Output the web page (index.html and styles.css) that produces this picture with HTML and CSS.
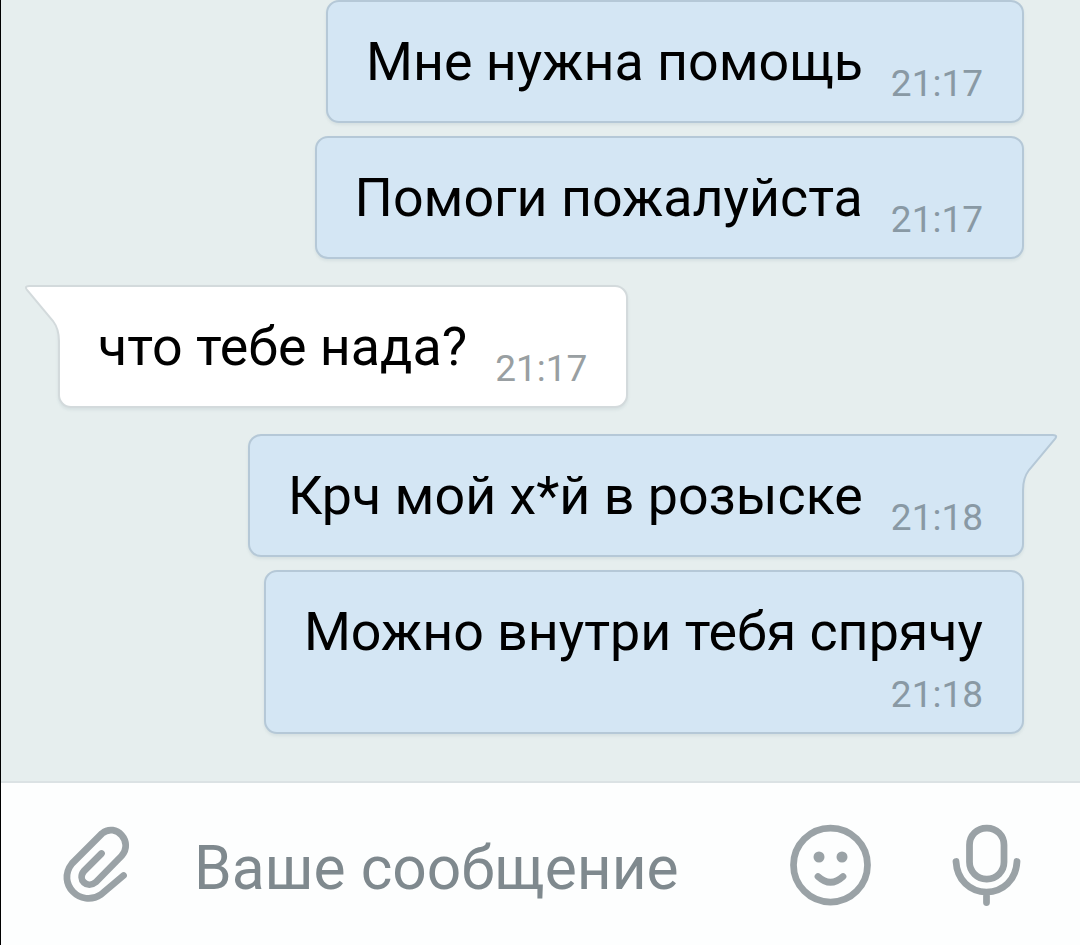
FILE: index.html
```html
<!DOCTYPE html>
<html lang="ru">
<head>
    <meta charset="UTF-8">
    <meta name="viewport" content="width=device-width, initial-scale=1.0">
    <title>Сообщения</title>
    <link rel="stylesheet" href="styles.css">
</head>
<body>

<!-- Переписка -->
<main class="chat">
    <div class="message out">
        <span class="text">Мне нужна помощь</span>
        <span class="time">21:17</span>
    </div>
    <div class="message out second">
        <span class="text">Помоги пожалуйста</span>
        <span class="time">21:17</span>
    </div>
    <div class="message in">
        <svg class="tail" width="50" height="64" viewBox="0 0 50 64">
            <path class="tail-fill" d="M50 1H5Q0 1 3 5L29 36Q35 44 35 56V64H50Z"/>
            <path class="tail-line" d="M50 1H5Q0 1 3 5L29 36Q35 44 35 56V64"/>
        </svg>
        <span class="text">что тебе нада?</span>
        <span class="time">21:17</span>
    </div>
    <div class="message out third">
        <svg class="tail" width="50" height="64" viewBox="0 0 50 64">
            <path class="tail-fill" d="M0 1H45Q50 1 47 5L21 36Q15 44 15 56V64H0Z"/>
            <path class="tail-line" d="M0 1H45Q50 1 47 5L21 36Q15 44 15 56V64"/>
        </svg>
        <span class="text">Крч мой х*й в розыске</span>
        <span class="time">21:18</span>
    </div>
    <div class="message out wrap">
        <span class="text">Можно внутри тебя спрячу</span>
        <span class="time">21:18</span>
    </div>
</main>

<!-- Поле ввода -->
<footer class="composer">
    <svg class="icon clip" width="70" height="80" viewBox="62 825 70 80">
        <path d="M101.500 853.500L84 871C77 879.500 87 889.500 96 882L121.500 856C134 842 116 822 102 833.500L72 863.500C56 884 81 908 101 894.500L123.500 875.500"/>
    </svg>
    <span class="placeholder">Ваше сообщение</span>
    <svg class="icon smile" width="82" height="82" viewBox="0 0 82 82">
        <circle cx="40.500" cy="41" r="37"/>
        <circle class="eye" cx="29" cy="33" r="5.500"/>
        <circle class="eye" cx="52" cy="33" r="5.500"/>
        <path d="M28 52.500Q40.500 64 53 52.500"/>
    </svg>
    <svg class="icon mic" width="70" height="84" viewBox="0 0 70 84">
        <rect x="17.500" y="5" width="34.500" height="51" rx="17"/>
        <path d="M4 38.500C5 57 18 69 34.500 69S64 57 65 38.500M34.500 69V79.500"/>
    </svg>
</footer>

</body>
</html>
```
FILE: styles.css
```css
* {
    box-sizing: border-box;
}
body {
    font-family: Roboto, "Noto Sans", sans-serif;
    margin: 0;
    height: 945px;
    display: flex;
    flex-direction: column;
    background-color: #e6eeee;
    border-left: 1px solid #000;
    overflow: hidden;
}
.chat {
    height: 781px;
    padding: 0 56px 0 57px;
    display: flex;
    flex-direction: column;
    align-items: flex-start;
}
.message {
    position: relative;
    display: flex;
    align-items: flex-end;
    gap: 28px;
    height: 123px;
    flex-shrink: 0;
    padding: 28px 39px 27px 38px;
    border: 2px solid #b5c8d7;
    border-radius: 13px;
    box-shadow: 0 2px 3px rgba(100, 130, 140, 0.12);
    white-space: nowrap;
}
.out {
    align-self: flex-end;
    background-color: #d4e6f4;
    margin-bottom: 13px;
}
.second {
    margin-bottom: 26px;
}
.in {
    background-color: #fff;
    border-color: #d3dadc;
    border-top-left-radius: 0;
    margin-bottom: 26px;
}
.third {
    border-top-right-radius: 0;
}
.wrap {
    flex-direction: column;
    height: 164px;
    gap: 9px;
}
.text {
    font-size: 53.75px;
    line-height: 64px;
    color: #000;
}
.time {
    font-size: 37px;
    line-height: 44px;
    color: #8999a4;
    margin-bottom: -12px;
}
.in .time {
    color: #999fa2;
}
.wrap .time {
    margin-bottom: 0;
}
.tail {
    position: absolute;
    top: -2px;
    left: -36px;
}
.third .tail {
    left: auto;
    right: -36px;
}
.tail-fill {
    fill: #fff;
}
.third .tail-fill {
    fill: #d4e6f4;
}
.tail-line {
    fill: none;
    stroke: #d3dadc;
    stroke-width: 2;
}
.third .tail-line {
    stroke: #b5c8d7;
}
.composer {
    flex: 1;
    display: flex;
    align-items: center;
    padding: 2px 58px 0 61px;
    background-color: #fdfefe;
    border-top: 2px solid #dbe2e4;
}
.icon {
    fill: none;
    stroke: #9aa2a6;
    stroke-width: 6.75;
    stroke-linecap: round;
    stroke-linejoin: round;
}
.eye {
    fill: #9aa2a6;
    stroke: none;
}
.placeholder {
    flex: 1;
    margin-left: 62px;
    padding-top: 8px;
    font-size: 60.5px;
    line-height: 70px;
    color: #7f898e;
}
.mic {
    margin-left: 80px;
}
```
